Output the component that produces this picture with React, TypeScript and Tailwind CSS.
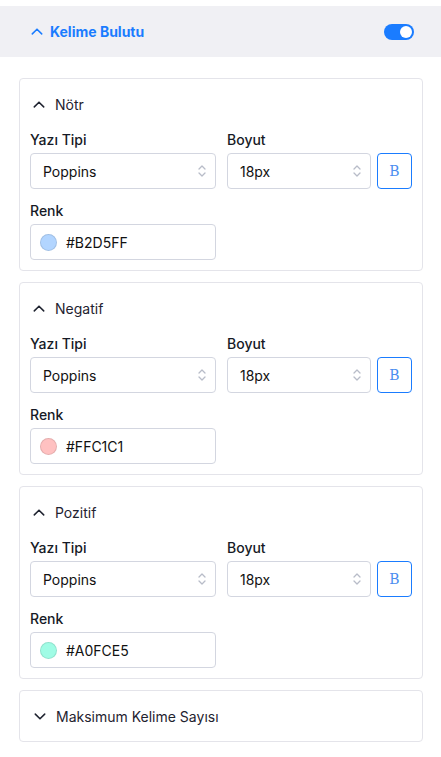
import React from 'react'

const font = { fontFamily: 'Inter, "Noto Sans", sans-serif' }

function ChevronUp({ className }: { className?: string }) {
  return (
    <svg className={className} viewBox="0 0 14 8" fill="none" stroke="currentColor" strokeWidth={1.8} strokeLinecap="round" strokeLinejoin="round">
      <path d="M1.5 6.8L7 1.3l5.5 5.5" />
    </svg>
  )
}

function ChevronDown({ className }: { className?: string }) {
  return (
    <svg className={className} viewBox="0 0 14 8" fill="none" stroke="currentColor" strokeWidth={1.8} strokeLinecap="round" strokeLinejoin="round">
      <path d="M1.5 1.2L7 6.7l5.5-5.5" />
    </svg>
  )
}

function SelectArrows() {
  return (
    <svg className="w-[10px] h-[14px] text-[#b8bcc8]" viewBox="0 0 10 14" fill="none" stroke="currentColor" strokeWidth={1.3} strokeLinecap="round" strokeLinejoin="round">
      <path d="M2 5l3-3 3 3" />
      <path d="M2 9l3 3 3-3" />
    </svg>
  )
}

interface StyleCardProps {
  title: string
  color: string
}

function StyleCard({ title, color }: StyleCardProps) {
  return (
    <div className="border border-[#e4e4ea] rounded-[4px] px-[10px] pt-[14px] pb-[10px]">
      <div className="flex items-center h-[22px] pl-[3px] text-[#1f2330] text-[14px]">
        <ChevronUp className="w-[12px] h-[7px] mr-[10px]" />
        <span>{title}</span>
      </div>
      <div className="flex gap-[11px] mt-[15px]">
        <div className="w-[186px]">
          <div className="text-[14px] font-medium text-[#161a26] h-[20px] leading-[20px]">Yazı Tipi</div>
          <div className="mt-[3px] h-[36px] border border-[#d3d6e0] rounded-[4px] flex items-center justify-between pl-[12px] pr-[8px] text-[14px] text-[#111]">
            <span>Poppins</span>
            <SelectArrows />
          </div>
        </div>
        <div className="flex-1">
          <div className="text-[14px] font-medium text-[#161a26] h-[20px] leading-[20px]">Boyut</div>
          <div className="mt-[3px] flex gap-[6px]">
            <div className="w-[144px] h-[36px] border border-[#d3d6e0] rounded-[4px] flex items-center justify-between pl-[12px] pr-[8px] text-[14px] text-[#111]">
              <span>18px</span>
              <SelectArrows />
            </div>
            <div
              className="w-[35px] h-[36px] border border-[#1a7cff] rounded-[4px] flex items-center justify-center text-[#4a8ef0] text-[14px]"
              style={{ fontFamily: '"DejaVu Serif", serif' }}
            >
              B
            </div>
          </div>
        </div>
      </div>
      <div className="mt-[12px] text-[14px] font-medium text-[#161a26] h-[20px] leading-[20px]">Renk</div>
      <div className="mt-[3px] w-[186px] h-[36px] border border-[#d3d6e0] rounded-[4px] flex items-center pl-[9px] text-[14px] text-[#111]">
        <span
          className="w-[17px] h-[17px] rounded-full border border-black/10"
          style={{ backgroundColor: color }}
        />
        <span className="ml-[9px]">{color}</span>
      </div>
    </div>
  )
}

export default function App() {
  return (
    <div className="w-[441px] h-[757px] bg-white" style={font}>
      <div className="pt-[6px]">
        <div className="h-[51px] bg-[#f0f0f4] flex items-center justify-between pl-[31px] pr-[27px]">
          <div className="flex items-center text-[#1a7cff]">
            <ChevronUp className="w-[12px] h-[7px] mr-[7px]" />
            <span className="text-[14px] font-bold">Kelime Bulutu</span>
          </div>
          <div className="w-[30px] h-[16px] rounded-full bg-[#1a7cff] flex items-center justify-end pr-[2px]">
            <span className="w-[12px] h-[12px] rounded-full bg-white" />
          </div>
        </div>
      </div>
      <div className="pl-[19px] pr-[18px] pt-[21px] flex flex-col gap-[11px]">
        <StyleCard title="Nötr" color="#B2D5FF" />
        <StyleCard title="Negatif" color="#FFC1C1" />
        <StyleCard title="Pozitif" color="#A0FCE5" />
        <div className="border border-[#e4e4ea] rounded-[4px] h-[52px] flex items-center pl-[14px] text-[#1f2330] text-[14px]">
          <ChevronDown className="w-[12px] h-[7px] mr-[10px]" />
          <span>Maksimum Kelime Sayısı</span>
        </div>
      </div>
    </div>
  )
}
